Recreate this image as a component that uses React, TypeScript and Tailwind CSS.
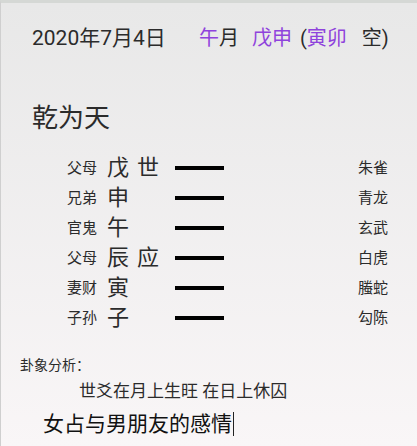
const rows = [
  { rel: '父母', zhi: '戊', mark: '世', god: '朱雀' },
  { rel: '兄弟', zhi: '申', mark: '', god: '青龙' },
  { rel: '官鬼', zhi: '午', mark: '', god: '玄武' },
  { rel: '父母', zhi: '辰', mark: '应', god: '白虎' },
  { rel: '妻财', zhi: '寅', mark: '', god: '螣蛇' },
  { rel: '子孙', zhi: '子', mark: '', god: '勾陈' },
];

export default function App() {
  return (
    <div
      className="w-[417px] h-[446px] overflow-hidden border-t-[3px] border-l border-t-[#d5d8d5] border-l-[#cfcfcf] bg-gradient-to-b from-[#e8e8e8] to-[#f9f6f7] text-[#2b2b2b]"
      style={{ fontFamily: 'Roboto, "Noto Sans CJK SC", "Noto Sans", sans-serif' }}
    >
      <div className="flex items-center pt-[20px] pl-[31px] h-[50px] text-[20px] leading-none">
        <span className="w-[167px] text-[21px]">2020年7月4日</span>
        <span className="text-[#8f43dc]">午</span>
        <span>月</span>
        <span className="ml-[13px] text-[#8f43dc]">戊申</span>
        <span className="ml-[8px]">(</span>
        <span className="text-[#8f43dc]">寅卯</span>
        <span className="ml-[15px]">空)</span>
      </div>

      <div className="pl-[31px] pt-[52px] text-[26px] leading-none">乾为天</div>

      <div className="mt-[22px] flex flex-col">
        {rows.map((r, i) => (
          <div key={i} className="flex items-center h-[30px] pl-[66px]">
            <span className="w-[40px] text-[15px] leading-none">{r.rel}</span>
            <span className="w-[30px] text-[22px] leading-none">{r.zhi}</span>
            <span className="w-[38px] text-[22px] leading-none">{r.mark}</span>
            <span className="w-[49px] h-[4px] bg-black" />
            <span className="ml-[134px] text-[15px] leading-none">{r.god}</span>
          </div>
        ))}
      </div>

      <div className="pl-[19px] pt-[25px] text-[14px] leading-none">卦象分析：</div>
      <div className="pl-[78px] pt-[11px] text-[17px] leading-none">世爻在月上生旺 在日上休囚</div>
      <div className="pl-[42px] pt-[12px] flex items-center text-[21px] leading-none text-[#111]">
        <span>女占与男朋友的感情</span>
        <span className="w-px h-[24px] bg-[#222] ml-px" />
      </div>
    </div>
  );
}
